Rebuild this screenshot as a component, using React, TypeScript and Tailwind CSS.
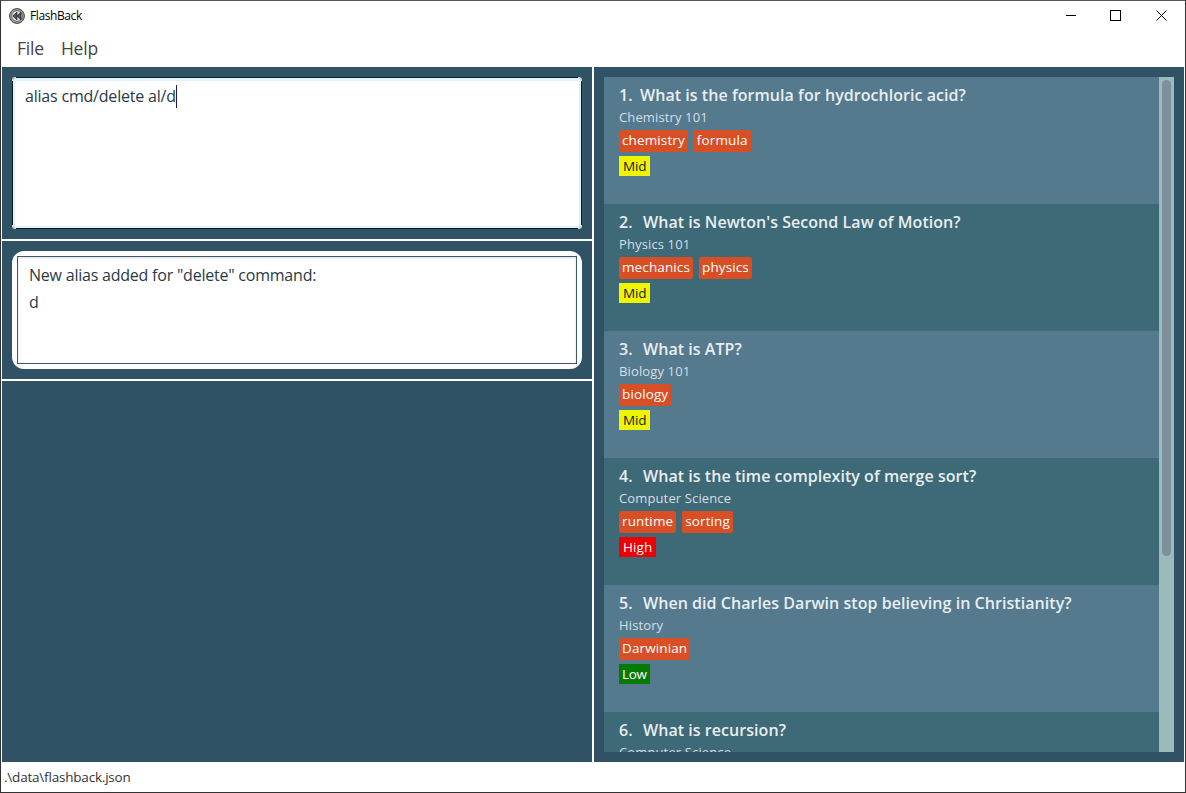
const font = { fontFamily: '"Open Sans", "Noto Sans", sans-serif' };

const cards = [
  { n: "1.", q: "What is the formula for hydrochloric acid?", c: "Chemistry 101", tags: ["chemistry", "formula"], p: "Mid" },
  { n: "2.", q: "What is Newton's Second Law of Motion?", c: "Physics 101", tags: ["mechanics", "physics"], p: "Mid" },
  { n: "3.", q: "What is ATP?", c: "Biology 101", tags: ["biology"], p: "Mid" },
  { n: "4.", q: "What is the time complexity of merge sort?", c: "Computer Science", tags: ["runtime", "sorting"], p: "High" },
  { n: "5.", q: "When did Charles Darwin stop believing in Christianity?", c: "History", tags: ["Darwinian"], p: "Low" },
  { n: "6.", q: "What is recursion?", c: "Computer Science", tags: ["recursion"], p: "Mid" },
];

function Priority({ p }: { p: string }) {
  const cls =
    p === "Mid"
      ? "bg-[#eef500] text-[#1b1b1b] tracking-[-0.2px] px-[4px]"
      : p === "High"
        ? "bg-[#f00000] text-white tracking-[0.1px] px-[4px]"
        : "bg-[#057a05] text-white tracking-[-0.3px] px-[3px]";
  return <span className={`${cls} h-5 text-[13.5px] leading-5`}>{p}</span>;
}

function Card({ i, card }: { i: number; card: (typeof cards)[number] }) {
  return (
    <div className={`${i % 2 === 0 ? "bg-[#557a8e]" : "bg-[#3e6976]"} h-[127px] shrink-0 pl-[15px] pt-[7px]`}>
      <div className="flex h-[23px] whitespace-pre text-[16px] font-semibold leading-[23px] tracking-[0.05px] text-[#e8eef1]">
        <span className={i === 0 ? "w-[21px]" : "w-[24px]"}>{card.n}</span>
        <span>{card.q}</span>
      </div>
      <div className="mt-[1px] h-[19px] text-[13px] leading-[19px] tracking-[0.13px] text-[#d5dfe4]">{card.c}</div>
      <div className="mt-[3px] flex h-[22px] gap-[6px]">
        {card.tags.map((t) => (
          <span key={t} className="h-[22px] rounded-[2px] bg-[#d84f26] px-[3px] text-[13.5px] font-medium leading-[21px] tracking-[0.12px] text-white">
            {t}
          </span>
        ))}
      </div>
      <div className="mt-[4px] flex h-5">
        <Priority p={card.p} />
      </div>
    </div>
  );
}

export default function App() {
  return (
    <div style={font} className="flex h-[793px] w-[1186px] flex-col overflow-hidden border border-[#333333] border-t-[#555555] bg-white">
      {/* Title bar */}
      <div className="flex h-[30px] shrink-0 items-center pl-[8px] text-[12px] tracking-[-0.4px] text-black">
        <svg width="16" height="16" viewBox="0 0 16 16" className="mr-[5px]">
          <circle cx="8" cy="8" r="7.4" fill="#a0a0a0" stroke="#404040" strokeWidth="1" />
          <circle cx="8" cy="8" r="5.4" fill="#dcdcdc" stroke="#5a5a5a" strokeWidth="0.8" />
          <path d="M7.9 4.2 L4 8 L7.9 11.8 Z M12 4.2 L8.1 8 L12 11.8 Z" fill="#5a5a5a" stroke="#1c1c1c" strokeWidth="0.8" strokeLinejoin="round" />
        </svg>
        <span>FlashBack</span>
        <div className="ml-auto flex items-center pb-px pr-[18px]">
          <svg width="10" height="11" viewBox="0 0 10 11" className="mr-[34px]">
            <path d="M0 5.5 H10" stroke="#000" strokeWidth="1" />
          </svg>
          <svg width="11" height="11" viewBox="0 0 11 11" className="mr-[35px]">
            <rect x="0.5" y="0.5" width="10" height="10" fill="none" stroke="#000" strokeWidth="1" />
          </svg>
          <svg width="11" height="11" viewBox="0 0 11 11">
            <path d="M0.5 0.5 L10.5 10.5 M10.5 0.5 L0.5 10.5" stroke="#000" strokeWidth="1" />
          </svg>
        </div>
      </div>

      {/* Menu */}
      <div className="flex h-[36px] shrink-0 items-center gap-[17px] pb-[2px] pl-[16px] text-[17.5px] tracking-[-0.2px] text-[#444444]">
        <span>File</span>
        <span>Help</span>
      </div>

      {/* Main */}
      <div className="flex min-h-0 flex-1 pl-[1px] pr-[1px]">
        <div className="flex w-[590px] shrink-0 flex-col bg-[#2f5264]">
          <div className="flex h-[172px] shrink-0 p-[10px]">
            <div className="relative flex-1 rounded-[3px] border border-[#0c1a22] bg-white shadow-[inset_2px_3px_0_0_#dff1f9,inset_-2px_-2px_0_0_#dff1f9]">
              <span className="absolute -left-px -top-px h-[4px] w-[4px] rounded-tl-[3px] border-l border-t border-[#d0d6da]" />
              <span className="absolute -right-px -top-px h-[4px] w-[4px] rounded-tr-[3px] border-r border-t border-[#d0d6da]" />
              <span className="absolute -bottom-px -left-px h-[4px] w-[4px] rounded-bl-[3px] border-b border-l border-[#d0d6da]" />
              <span className="absolute -bottom-px -right-px h-[4px] w-[4px] rounded-br-[3px] border-b border-r border-[#d0d6da]" />
              <div className="flex pl-[12px] pt-[6px] text-[16px] leading-[24px] tracking-[-0.2px] text-[#2a3a44]">
                <span>alias cmd/delete al/d</span>
                <span className="mt-[1px] h-[23px] w-px bg-[#1a1a50]" />
              </div>
            </div>
          </div>
          <div className="h-[2px] shrink-0 bg-white" />
          <div className="flex h-[138px] shrink-0 p-[10px]">
            <div className="flex-1 rounded-[12px] bg-white p-[5px]">
              <div className="h-full border border-[#3a5a6c] pl-[11px] pt-[5px] text-[16px] leading-[27px] tracking-[-0.22px] text-[#2a3a44] shadow-[inset_0_1px_3px_rgba(0,0,0,0.12)]">
                <div>New alias added for "delete" command:</div>
                <div>d</div>
              </div>
            </div>
          </div>
          <div className="h-[2px] shrink-0 bg-white" />
          <div className="flex-1" />
        </div>
        <div className="w-[2px] shrink-0 bg-white" />
        <div className="flex w-[590px] shrink-0 bg-[#2f5264] p-[10px]">
          <div className="flex min-w-0 flex-1 flex-col overflow-hidden">
            {cards.map((c, i) => (
              <Card key={c.n} i={i} card={c} />
            ))}
          </div>
          <div className="flex w-[15px] shrink-0 flex-col bg-[#9bbabc] px-[3px] pt-[3px]">
            <div className="h-[476px] rounded-[5px] bg-[#7e909c]" />
          </div>
        </div>
      </div>

      {/* Status */}
      <div className="flex h-[30px] shrink-0 items-center pl-[3px] text-[13.5px] tracking-[-0.2px] text-[#333333]">
        .\data\flashback.json
      </div>
    </div>
  );
}
